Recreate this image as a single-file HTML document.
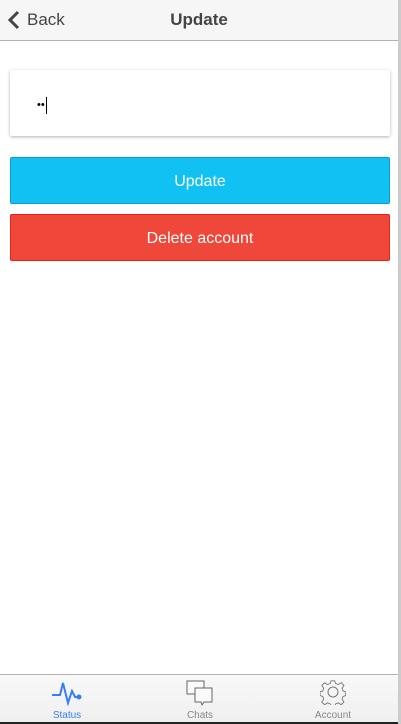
<!DOCTYPE html><html><head><style>
body{margin:0;width:401px;height:724px;background:#fff;font-family:"Liberation Sans",sans-serif;position:relative;overflow:hidden}
.r{position:absolute;right:0;top:0;width:3px;height:724px;background:#ccc}
.hdr{position:absolute;left:0;top:0;width:398px;height:40px;background:#f6f6f6;border-bottom:1px solid #b2b2b2}
.hdr .t{position:absolute;left:0;width:398px;top:10px;text-align:center;font-size:17px;font-weight:bold;color:#444}
.hdr .b{position:absolute;left:27px;top:10px;font-size:17px;color:#444}
.card{position:absolute;left:10px;top:70px;width:380px;height:66px;background:#fff;border-radius:2px;box-shadow:0 1px 3px rgba(0,0,0,.3)}
.btn{position:absolute;left:10px;width:378px;height:45px;border:1px solid;border-radius:2px;color:#fff;font-size:16px;text-align:center;line-height:48px}
.tab{position:absolute;left:0;top:674px;width:398px;height:47px;background:linear-gradient(#f8f8f8,#f0f0f0);border-top:1px solid #b2b2b2;border-bottom:2px solid #222}
.tab div{position:absolute;top:35px;font-size:10px;color:#888;text-align:center;width:80px}
</style></head><body>
<div class="r"></div>
<div class="hdr"><svg style="position:absolute;left:7px;top:10px" width="14" height="20"><path d="M11 2 L3 10 L11 18" stroke="#444" stroke-width="3" fill="none"/></svg><span class="b">Back</span><div class="t">Update</div></div>
<div class="card"><span style="position:absolute;left:27px;top:29px;font-size:11px">••</span><span style="position:absolute;left:36px;top:27px;width:1px;height:17px;background:#000"></span></div>
<div class="btn" style="top:157px;background:#11c1f3;border-color:#0a9dc7">Update</div>
<div class="btn" style="top:214px;background:#ef473a;border-color:#e42112">Delete account</div>
<div class="tab">
<svg style="position:absolute;left:51px;top:4px" width="32" height="28"><path d="M1 16 H9 L12 4 L17 24 L21 12 L24 18 H29" stroke="#387ef5" stroke-width="2" fill="none"/><circle cx="28" cy="18" r="2.5" fill="#387ef5"/></svg>
<div style="left:27px;color:#387ef5">Status</div>
<svg style="position:absolute;left:185px;top:4px" width="30" height="28"><path d="M2 2 H19 V15 H2 Z" stroke="#666" fill="#fafafa"/><path d="M10 9 H27 V23 H19 L17 26 L16 23 H10 Z" stroke="#666" fill="#fafafa"/></svg>
<div style="left:160px">Chats</div>
<svg style="position:absolute;left:320px;top:4px" width="26" height="26" viewBox="0 0 26 26"><circle cx="13" cy="13" r="5" stroke="#777" fill="none"/><path d="M11 1h4l1 3 3 1 3-2 3 3-2 3 1 3 3 1v4l-3 1-1 3 2 3-3 3-3-2-3 1-1 3h-4l-1-3-3-1-3 2-3-3 2-3-1-3-3-1v-4l3-1 1-3-2-3 3-3 3 2 3-1z" stroke="#777" fill="none" transform="scale(.92) translate(1 1)"/></svg>
<div style="left:293px">Account</div>
</div>
</body></html>
